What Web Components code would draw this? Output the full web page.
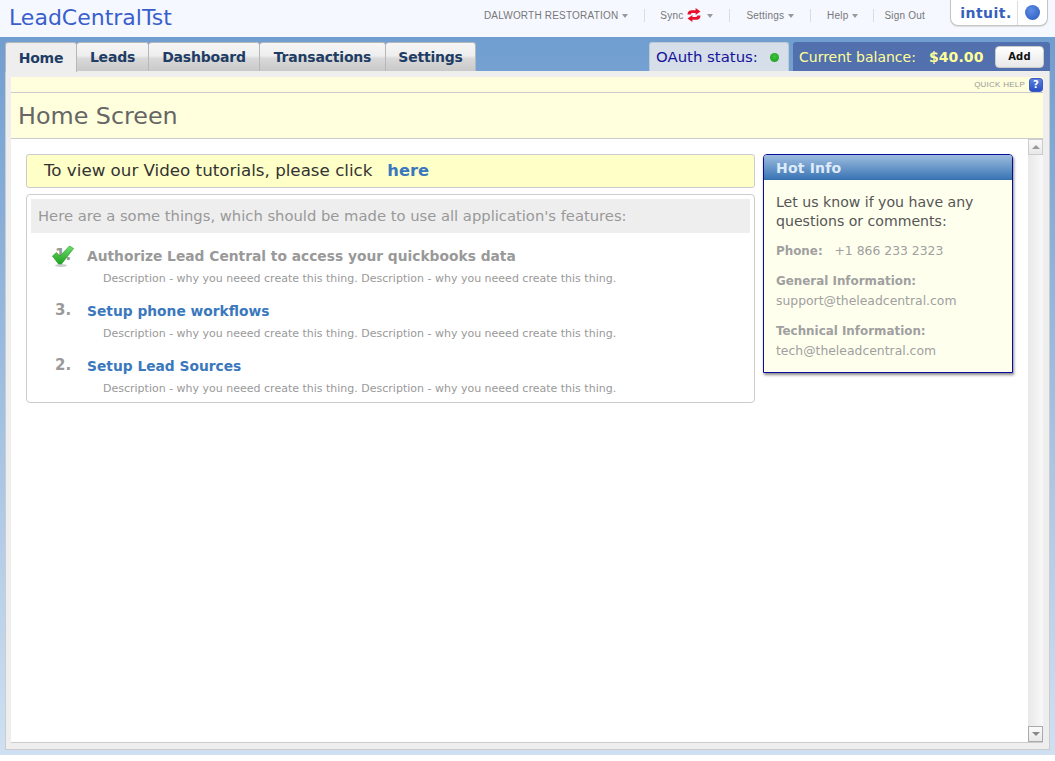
<!DOCTYPE html>
<html>
<head>
<meta charset="utf-8">
<title>LeadCentral</title>
<style>
  html, body { margin: 0; height: 761px; overflow: hidden; background: #fff; }
  body { font-family: "DejaVu Sans", Verdana, sans-serif; display: flex; flex-direction: column; }
  lc-shell { flex: none; height: 718px; }
</style>
</head>
<body>
<lc-topbar></lc-topbar>
<lc-shell>
  <lc-tabs slot="tabs"></lc-tabs>
  <lc-title slot="title" heading="Home Screen"></lc-title>
  <lc-home slot="content"></lc-home>
</lc-shell>

<script>
class LcTopbar extends HTMLElement {
  connectedCallback() {
    this.attachShadow({ mode: 'open' });
    const caret = '<i class="caret"></i>';
    const arrow = 'M.5 6C.5 2.500 3 2 5 2H8V0L12.500 3.200 8 6.500V4.600H5.500C4.200 4.600 3.500 5 3.500 6Z';
    this.shadowRoot.innerHTML = `
      <style>
        :host { display: flex; flex: none; height: 37px; background: #f5f8ff; align-items: flex-start; }
        .brand { font-size: 22px; color: #3a5fcd; padding: 5px 0 0 9px; line-height: 26px; flex: 1; }
        nav { display: flex; align-items: center; height: 31px; font: 10px/12px "Liberation Sans", Arial, sans-serif; color: #777; letter-spacing: .02em; }
        nav span { display: flex; align-items: center; gap: 3px; height: 13px; }
        nav span + span { border-left: 1px solid #ddd; margin-left: 16px; padding-left: 16px; }
        nav span.sync { padding-left: 15px; }
        nav span.tight { margin-left: 15px; padding-left: 10px; }
        .caret { width: 0; height: 0; border: 3px solid transparent; border-top: 4px solid #999; border-bottom: 0; margin-left: 1px; }
        .sync .caret { margin-left: 3px; }
        svg { display: block; margin: -2px 0 0 1px; }
        .logo { display: flex; align-items: center; box-sizing: border-box; width: 98px; height: 26px; margin: 0 7px 0 25px; background: #fff; border: 1px solid #c4c4c4; border-top: 0; border-radius: 0 0 8px 8px; box-shadow: 0 1px 1px #ddd; }
        .logo b { box-sizing: border-box; padding-left: 4px; font: 700 14px/24px "DejaVu Sans", sans-serif; color: #3560c0; flex: 1; text-align: center; letter-spacing: .5px; border-right: 1px solid #ddd; }
        .logo em { width: 15px; height: 15px; margin: 0 7px 0 7px; border-radius: 50%; background: radial-gradient(circle at 40% 35%, #5d8de6, #2a59bb); }
      </style>
      <div class="brand">LeadCentralTst</div>
      <nav>
        <span>DALWORTH RESTORATION ${caret}</span>
        <span class="sync">Sync
          <svg width="14" height="14" viewBox="0 0 13 13"><g fill="#e8102a"><path d="${arrow}"/><path transform="rotate(180 6.500 6.500)" d="${arrow}"/></g></svg>
          ${caret}</span>
        <span>Settings ${caret}</span>
        <span>Help ${caret}</span>
        <span class="tight">Sign Out</span>
      </nav>
      <div class="logo"><b>intuit.</b><em></em></div>
    `;
  }
}
customElements.define('lc-topbar', LcTopbar);

class LcShell extends HTMLElement {
  connectedCallback() {
    this.attachShadow({ mode: 'open' });
    this.shadowRoot.innerHTML = `
      <style>
        :host { display: flex; flex-direction: column; box-sizing: border-box; padding: 5px; background: linear-gradient(#709ed0, #cfe0f2); }
        .panel { flex: 1; display: flex; flex-direction: column; background: #eee; padding: 6px 6px 6px 5px; border: 1px solid #ccc; border-top: 0; min-height: 0; }
        .inner { flex: 1; display: flex; flex-direction: column; min-height: 0; border-bottom: 1px solid #ccc; }
      </style>
      <slot name="tabs"></slot>
      <div class="panel">
        <div class="inner">
          <slot name="title"></slot>
          <slot name="content"></slot>
        </div>
      </div>
    `;
  }
}
customElements.define('lc-shell', LcShell);

class LcTabs extends HTMLElement {
  connectedCallback() {
    this.attachShadow({ mode: 'open' });
    const tabs = [['Home', 72], ['Leads', 72], ['Dashboard', 111], ['Transactions', 126], ['Settings', 90]];
    this.shadowRoot.innerHTML = `
      <style>
        :host { display: flex; height: 29px; flex: none; align-items: flex-start; }
        .tab { box-sizing: border-box; height: 29px; text-align: center; letter-spacing: -.2px; font: 700 14px/28px "DejaVu Sans", sans-serif; color: #1f3d64; border: 1px solid #b4b8bd; border-bottom: 0; border-left: 0; border-radius: 3px 3px 0 0; background: linear-gradient(#f6f6f6 0, #eee 45%, #d9d9d9 55%, #c9c9c9 100%); }
        .tab.on { background: #eee; height: 30px; padding-top: 1px; border-left: 1px solid #b4b8bd; position: relative; z-index: 1; }
        .push { flex: 1; }
        .oauth { box-sizing: border-box; display: flex; align-items: center; width: 140px; height: 29px; padding: 0 6px; font-size: 14.9px; color: #14149a; background: #d6deea; border: 1px solid #c0c8d4; border-bottom: 0; border-radius: 3px 3px 0 0; margin-right: 4px; }
        .oauth span { flex: 1; }
        .oauth i { width: 9px; height: 9px; border-radius: 50%; background: radial-gradient(circle at 50% 40%, #3cc43c, #1d961d); margin-right: 3px; }
        .bal { box-sizing: border-box; display: flex; align-items: center; width: 257px; height: 29px; padding: 0 6px; font-size: 14px; color: #ffff99; background: #5270ae; border-radius: 3px 3px 0 0; }
        .bal b { margin-left: 13px; flex: 1; font: 700 14px "DejaVu Sans", sans-serif; letter-spacing: .1px; }
        .add { box-sizing: border-box; width: 49px; height: 22px; background: linear-gradient(#fff, #e8e8e8); border-radius: 4px; border: 1px solid #ccc; font: 700 10px/20px "DejaVu Sans", sans-serif; letter-spacing: .2px; color: #111; text-align: center; }
      </style>
      ${tabs.map(([t, w], i) => `<div class="tab${i === 0 ? ' on' : ''}" style="width:${w}px">${t}</div>`).join('')}
      <div class="push"></div>
      <div class="oauth"><span>OAuth status:</span><i></i></div>
      <div class="bal">Current balance:<b>$40.00</b><div class="add">Add</div></div>
    `;
  }
}
customElements.define('lc-tabs', LcTabs);

class LcTitle extends HTMLElement {
  connectedCallback() {
    this.attachShadow({ mode: 'open' });
    this.shadowRoot.innerHTML = `
      <style>
        :host { display: block; flex: none; background: #ffffdd; border-bottom: 1px solid #ccc; }
        .help { display: flex; justify-content: flex-end; align-items: center; gap: 4px; height: 15px; border-bottom: 1px solid #ccc; font: 8px/15px "Liberation Sans", Arial, sans-serif; color: #999; letter-spacing: .03em; }
        .help i { box-sizing: border-box; width: 14px; height: 14px; background: linear-gradient(#5a80e0, #2a4fc0); border: 1px solid #3a5cc4; color: #fff; font: 700 10px/12px "DejaVu Sans", sans-serif; text-align: center; border-radius: 3px; }
        h1 { margin: 0; padding: 0 7px; height: 45px; font: 400 23.8px/47px "DejaVu Sans", sans-serif; color: #666; }
      </style>
      <div class="help">QUICK HELP <i>?</i></div>
      <h1>${this.getAttribute('heading')}</h1>
    `;
  }
}
customElements.define('lc-title', LcTitle);

class LcStep extends HTMLElement {
  connectedCallback() {
    this.attachShadow({ mode: 'open' });
    const done = this.hasAttribute('done');
    this.shadowRoot.innerHTML = `
      <style>
        :host { display: grid; grid-template-columns: 56px 1fr; height: 55px; }
        .num { position: relative; padding: 12px 0 0 24px; font: 700 15px/20px "DejaVu Sans", sans-serif; color: #999; }
        .num svg { position: absolute; left: 21px; top: 12px; }
        .t { font: 700 13.8px/20px "DejaVu Sans", sans-serif; color: ${done ? '#999' : '#3a78bd'}; padding-top: 13px; }
        .d { font: 11px/14px "DejaVu Sans", sans-serif; color: #999; padding: 6px 0 0 16px; white-space: nowrap; }
      </style>
      <div class="num">${this.getAttribute('num')}${done ? `
        <svg width="24" height="23" viewBox="0 0 24 23">
          <defs><linearGradient id="g" x1="0" y1="0" x2="0" y2="1"><stop offset="0" stop-color="#6fe06f"/><stop offset="1" stop-color="#1ea01e"/></linearGradient></defs>
          <ellipse cx="9" cy="20.500" rx="6" ry="1.500" fill="#ccc"/>
          <path d="M.5 11 4.500 7.500 8 11 17.500 1 21.500 3.500 9.500 19H6.500Z" fill="url(#g)" stroke="#2a9a2a" stroke-width=".7"/>
        </svg>` : ''}</div>
      <div>
        <div class="t">${this.getAttribute('title')}</div>
        <div class="d"><slot></slot></div>
      </div>
    `;
  }
}
customElements.define('lc-step', LcStep);

class LcHotInfo extends HTMLElement {
  connectedCallback() {
    this.attachShadow({ mode: 'open' });
    this.shadowRoot.innerHTML = `
      <style>
        :host { display: block; box-sizing: border-box; width: 250px; height: 219px; border: 1px solid #0a0a9c; border-radius: 4px 4px 0 0; background: #ffffee; box-shadow: 1px 2px 3px #888; }
        header { height: 25px; box-sizing: border-box; padding-left: 12px; font: 700 14px/27px "DejaVu Sans", sans-serif; letter-spacing: .2px; color: #dfeaf8; background: linear-gradient(#9dbcde, #3b76b6); border-bottom: 1px solid #3b6ea8; border-radius: 3px 3px 0 0; }
        section { padding: 13px 12px 0; font-size: 12.4px; color: #a0a0a0; }
        p { margin: 0; }
        .lead { font-size: 14.1px; line-height: 19px; color: #555; margin-bottom: 10px; }
        .row { line-height: 20px; margin-bottom: 10px; }
        .row b { font-weight: 700; font-size: 11.9px; }
      </style>
      <header>Hot Info</header>
      <section>
        <p class="lead">Let us know if you have any questions or comments:</p>
        <p class="row"><b>Phone:</b> &nbsp; +1 866 233 2323</p>
        <p class="row"><b>General Information:</b><br>support@theleadcentral.com</p>
        <p class="row"><b>Technical Information:</b><br>tech@theleadcentral.com</p>
      </section>
    `;
  }
}
customElements.define('lc-hot-info', LcHotInfo);

class LcScrollbar extends HTMLElement {
  connectedCallback() {
    this.attachShadow({ mode: 'open' });
    this.shadowRoot.innerHTML = `
      <style>
        :host { display: flex; flex-direction: column; flex: none; width: 15px; background: linear-gradient(90deg, #e8e8e8, #f8f8f8); justify-content: space-between; }
        div { box-sizing: border-box; height: 16px; background: linear-gradient(#fafafa, #e8e8e8); border: 1px solid #ccc; display: flex; align-items: center; justify-content: center; }
        .dn { border-color: #aaa; }
        i { width: 0; height: 0; border: 4px solid transparent; }
        .up i { border-bottom: 4px solid #999; border-top: 0; }
        .dn i { border-top: 4px solid #888; border-bottom: 0; }
      </style>
      <div class="up"><i></i></div>
      <div class="dn"><i></i></div>
    `;
  }
}
customElements.define('lc-scrollbar', LcScrollbar);

class LcHome extends HTMLElement {
  connectedCallback() {
    this.attachShadow({ mode: 'open' });
    const desc = 'Description - why you neeed create this thing. Description - why you neeed create this thing.';
    this.shadowRoot.innerHTML = `
      <style>
        :host { display: flex; flex: 1; min-height: 0; background: #fff; }
        .body { flex: 1; display: flex; align-items: flex-start; gap: 8px; padding: 15px 15px 0; }
        .main { width: 729px; display: flex; flex-direction: column; gap: 6px; flex: none; }
        .video { box-sizing: border-box; height: 34px; padding-left: 17px; font: 16.7px/31px "DejaVu Sans", sans-serif; color: #333; background: #ffffc8; border: 1px solid #ccc; border-radius: 3px; white-space: pre; }
        .video a { font-weight: 700; font-size: 16.3px; color: #3a78bd; margin-left: -1px; }
        .steps { box-sizing: border-box; height: 209px; padding: 4px; border: 1px solid #ccc; border-radius: 4px; }
        h2 { margin: 0; height: 34px; padding-left: 7px; font: 400 14.75px/34px "DejaVu Sans", sans-serif; color: #999; background: #eee; }
      </style>
      <div class="body">
        <div class="main">
          <div class="video">To view our Video tutorials, please click   <a>here</a></div>
          <div class="steps">
            <h2>Here are a some things, which should be made to use all application's features:</h2>
            <lc-step num="1." done title="Authorize Lead Central to access your quickbooks data">${desc}</lc-step>
            <lc-step num="3." title="Setup phone workflows">${desc}</lc-step>
            <lc-step num="2." title="Setup Lead Sources">${desc}</lc-step>
          </div>
        </div>
        <lc-hot-info></lc-hot-info>
      </div>
      <lc-scrollbar></lc-scrollbar>
    `;
  }
}
customElements.define('lc-home', LcHome);
</script>
</body>
</html>
